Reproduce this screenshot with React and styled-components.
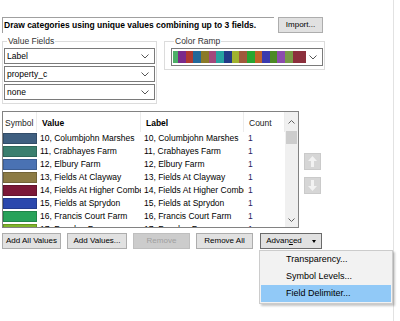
import React from 'react';
import styled, { createGlobalStyle } from 'styled-components';

const GlobalStyle = createGlobalStyle`
  html, body {
    margin: 0;
    background: #ffffff;
  }
  body {
    font-family: "Liberation Sans", Arial, sans-serif;
    font-size: 8.5px;
    color: #000;
  }
`;

const rampColors = [
  '#4caf68', '#7b2a8c', '#b03a30', '#23689a', '#8a7a28', '#a4487c', '#27a3a0', '#233a86', '#a0b22e',
  '#a05a3c', '#27a630', '#c0632a', '#3a3aaf', '#4c8a25', '#8c4cae', '#789c46', '#8c2f3c',
];

const rows = [
  { value: '10, Columbjohn Marshes', color: '#3f5f80' },
  { value: '11, Crabhayes Farm', color: '#3a7f6e' },
  { value: '12, Elbury Farm', color: '#4a72b3' },
  { value: '13, Fields At Clayway', color: '#8c7b45' },
  { value: '14, Fields At Higher Comberoy', color: '#7b1838' },
  { value: '15, Fields at Sprydon', color: '#2b48ad' },
  { value: '16, Francis Court Farm', color: '#27a25a' },
  { value: '17, Fursdon Farm', color: '#7fb52a' },
];

const Chevron = () => (
  <svg width="8" height="5" viewBox="0 0 8 5">
    <path d="M0.5 0.5 L4 4 L7.5 0.5" fill="none" stroke="#555" strokeWidth="1" />
  </svg>
);

const Page = styled.div`
  position: relative;
  box-sizing: border-box;
  width: 394px;
  height: 321px;
  border-right: 1px solid #e2e2e2;
  padding: 17px 0 0 2px;
`;

const TopRow = styled.div`
  display: flex;
  align-items: flex-start;
  gap: 4px;
`;

const DescBox = styled.div`
  box-sizing: border-box;
  width: 272px;
  height: 16px;
  border-top: 1px solid #a0a0a0;
  border-left: 1px solid #a0a0a0;
  padding-left: 1px;
  font-weight: bold;
  line-height: 15px;
  white-space: nowrap;
  overflow: hidden;
`;

const Button = styled.button`
  box-sizing: border-box;
  width: ${p => p.$w}px;
  height: 16px;
  margin: 0;
  padding: 0;
  background: ${p => (p.$disabled ? '#cccccc' : '#e1e1e1')};
  border: 1px solid ${p => (p.$focus ? '#6a6a6a' : p.$disabled ? '#bfbfbf' : '#adadad')};
  color: ${p => (p.$disabled ? '#a0a0a0' : '#000')};
  font-family: inherit;
  font-size: 8px;
  line-height: 14px;
  display: flex;
  align-items: center;
  justify-content: center;
  gap: 10px;
`;

const GroupsRow = styled.div`
  display: flex;
  align-items: flex-start;
  gap: 7px;
  margin-top: 4px;
`;

const Group = styled.fieldset`
  box-sizing: border-box;
  width: ${p => p.$w}px;
  margin: 0;
  border: 1px solid #dcdcdc;
  padding: 2px ${p => p.$pr}px 3px ${p => p.$pl}px;
`;

const Legend = styled.legend`
  margin-left: 3px;
  padding: 0 1px;
  line-height: 9px;
  color: #333;
`;

const ComboStack = styled.div`
  display: flex;
  flex-direction: column;
  gap: 2px;
`;

const Combo = styled.div`
  box-sizing: border-box;
  height: ${p => p.$h}px;
  border: 1px solid #7a7a7a;
  background: #fff;
  display: flex;
  align-items: center;
  justify-content: space-between;
  padding: 0 5px 0 ${p => p.$pl}px;
`;

const Ramp = styled.div`
  display: flex;
  height: 12px;
  width: 133px;
`;

const RampStep = styled.div`
  flex: ${p => p.$grow};
  background: ${p => p.$c};
`;

const TableRow = styled.div`
  display: flex;
  align-items: flex-start;
  margin-top: 7px;
`;

const Table = styled.div`
  box-sizing: border-box;
  width: 297px;
  height: 117px;
  border: 1px solid #828282;
  display: flex;
  overflow: hidden;
`;

const Grid = styled.div`
  flex: 1;
  overflow: hidden;
`;

const cols = '34px 104px 103px 41px';

const HeaderRow = styled.div`
  display: grid;
  grid-template-columns: ${cols};
  height: 20px;
`;

const HeadCell = styled.div`
  padding-left: ${p => (p.$pl ?? 3)}px;
  border-right: 1px solid #ececec;
  line-height: 22px;
  font-weight: ${p => (p.$bold ? 'bold' : 'normal')};
  color: ${p => (p.$bold ? '#000' : '#222')};
  white-space: nowrap;
  overflow: hidden;
`;

const DataRow = styled.div`
  display: grid;
  grid-template-columns: ${cols};
  height: 13px;
  line-height: 13px;
`;

const Swatch = styled.div`
  box-sizing: border-box;
  margin: 1px 0 1px 0;
  height: 11px;
  background: ${p => p.$c};
  border: 1px solid rgba(0, 0, 0, 0.18);
`;

const Cell = styled.div`
  padding-left: ${p => p.$pl}px;
  white-space: nowrap;
  overflow: hidden;
  color: ${p => p.$color || '#000'};
`;

const ScrollBar = styled.div`
  width: 13px;
  background: #f0f0f0;
  display: flex;
  flex-direction: column;
  align-items: center;
`;

const ScrollArrow = styled.div`
  height: ${p => p.$h}px;
  display: flex;
  align-items: center;
  justify-content: center;
`;

const Thumb = styled.div`
  width: 11px;
  height: 13px;
  background: #cdcdcd;
`;

const ScrollSpacer = styled.div`
  flex: 1;
`;

const MoveColumn = styled.div`
  display: flex;
  flex-direction: column;
  gap: 7px;
  margin-left: 5px;
  padding-top: 42px;
`;

const MoveButton = styled.div`
  box-sizing: border-box;
  width: 17px;
  height: 17px;
  background: #d6d6d6;
  border: 1px solid #cacaca;
  display: flex;
  align-items: center;
  justify-content: center;
`;

const ButtonRow = styled.div`
  display: flex;
  gap: 6px;
  margin-top: 5px;
`;

const MenuAnchor = styled.div`
  position: relative;
  margin-left: 1px;
`;

const Menu = styled.div`
  position: absolute;
  top: 17px;
  left: -1px;
  box-sizing: border-box;
  width: 134px;
  height: 54px;
  background: #f2f2f2;
  border: 1px solid #cccccc;
  box-shadow: 2px 2px 2px rgba(0, 0, 0, 0.22);
  padding: 0 1px;
`;

const MenuItem = styled.div`
  height: 17px;
  line-height: 17px;
  padding-left: 25px;
  font-size: 9px;
  background: ${p => (p.$active ? '#91c9f7' : 'transparent')};
`;

const Arrow = ({ up }) => (
  <svg width="9" height="11" viewBox="0 0 9 11" style={{ transform: up ? 'none' : 'rotate(180deg)' }}>
    <path d="M4.5 0 L9 5 L6 5 L6 11 L3 11 L3 5 L0 5 Z" fill="#f2f2f2" />
  </svg>
);

const ScrollChevron = ({ up }) => (
  <svg width="7" height="4" viewBox="0 0 7 4">
    <path d={up ? 'M0.5 3.5 L3.5 0.5 L6.5 3.5' : 'M0.5 0.5 L3.5 3.5 L6.5 0.5'} fill="none" stroke="#606060" strokeWidth="1" />
  </svg>
);

const Caret = styled.span`
  width: 0;
  height: 0;
  border-left: 2px solid transparent;
  border-right: 2px solid transparent;
  border-top: 3px solid #000;
`;

export default function App() {
  return (
    <>
      <GlobalStyle />
      <Page>
        <TopRow>
          <DescBox>Draw categories using unique values combining up to 3 fields.</DescBox>
          <Button $w={45}>Import...</Button>
        </TopRow>

        <GroupsRow>
          <Group $w={155} $pl={1} $pr={1}>
            <Legend>Value Fields</Legend>
            <ComboStack>
              {['Label', 'property_c', 'none'].map(v => (
                <Combo key={v} $h={16} $pl={2}>
                  <span>{v}</span>
                  <Chevron />
                </Combo>
              ))}
            </ComboStack>
          </Group>
          <Group $w={161} $pl={6} $pr={1}>
            <Legend>Color Ramp</Legend>
            <Combo $h={18} $pl={1}>
              <Ramp>
                {rampColors.map((c, i) => (
                  <RampStep key={i} $c={c} $grow={i === 0 ? 5 : i === rampColors.length - 1 ? 13 : 7.5} />
                ))}
              </Ramp>
              <Chevron />
            </Combo>
          </Group>
        </GroupsRow>

        <TableRow>
          <Table>
            <Grid>
              <HeaderRow>
                <HeadCell $pl={2}>Symbol</HeadCell>
                <HeadCell $bold $pl={5}>Value</HeadCell>
                <HeadCell $bold $pl={5}>Label</HeadCell>
                <HeadCell $pl={5}>Count</HeadCell>
              </HeaderRow>
              {rows.map(r => (
                <DataRow key={r.value}>
                  <Swatch $c={r.color} />
                  <Cell $pl={3}>{r.value}</Cell>
                  <Cell $pl={3}>{r.value}</Cell>
                  <Cell $pl={4} $color="#2a2060">1</Cell>
                </DataRow>
              ))}
            </Grid>
            <ScrollBar>
              <ScrollArrow $h={19}><ScrollChevron up /></ScrollArrow>
              <Thumb />
              <ScrollSpacer />
              <ScrollArrow $h={15}><ScrollChevron /></ScrollArrow>
            </ScrollBar>
          </Table>
          <MoveColumn>
            <MoveButton><Arrow up /></MoveButton>
            <MoveButton><Arrow /></MoveButton>
          </MoveColumn>
        </TableRow>

        <ButtonRow>
          <Button $w={59}>Add All Values</Button>
          <Button $w={60}>Add Values...</Button>
          <Button $w={57} $disabled>Remove</Button>
          <Button $w={57}>Remove All</Button>
          <MenuAnchor>
            <Button $w={62} $focus>
              <span>Advan<u>c</u>ed</span>
              <Caret />
            </Button>
            <Menu>
              <MenuItem>Transparency...</MenuItem>
              <MenuItem>Symbol Levels...</MenuItem>
              <MenuItem $active>Field Delimiter...</MenuItem>
            </Menu>
          </MenuAnchor>
        </ButtonRow>
      </Page>
    </>
  );
}
